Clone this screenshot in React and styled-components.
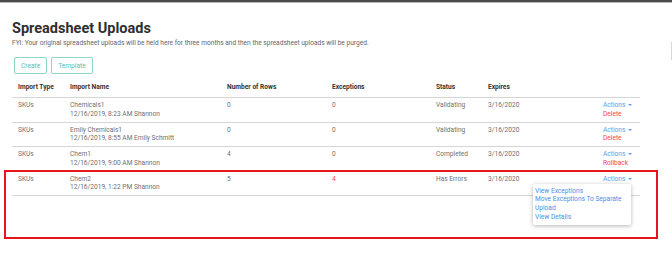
import React from "react";
import styled, { createGlobalStyle } from "styled-components";

const GlobalStyle = createGlobalStyle`
  html, body {
    margin: 0;
    padding: 0;
    background: #ffffff;
    font-family: Roboto, "Liberation Sans", sans-serif;
  }
`;

const rows = [
  {
    type: "SKUs",
    name: "Chemicals1",
    meta: "12/16/2019, 8:23 AM Shannon",
    count: "0",
    exceptions: "0",
    status: "Validating",
    expires: "3/16/2020",
    extra: "Delete",
  },
  {
    type: "SKUs",
    name: "Emily Chemicals1",
    meta: "12/16/2019, 8:55 AM Emily Schmitt",
    count: "0",
    exceptions: "0",
    status: "Validating",
    expires: "3/16/2020",
    extra: "Delete",
  },
  {
    type: "SKUs",
    name: "Chem1",
    meta: "12/16/2019, 9:00 AM Shannon",
    count: "4",
    exceptions: "0",
    status: "Completed",
    expires: "3/16/2020",
    extra: "Rollback",
  },
  {
    type: "SKUs",
    name: "Chem2",
    meta: "12/16/2019, 1:22 PM Shannon",
    count: "5",
    exceptions: "4",
    status: "Has Errors",
    expires: "3/16/2020",
    open: true,
  },
];

export default function App() {
  return (
    <Page>
      <GlobalStyle />
      <TopBar />
      <ScrollMark />
      <Content>
        <Title>Spreadsheet Uploads</Title>
        <Note>
          FYI: Your original spreadsheet uploads will be held here for three months and then the
          spreadsheet uploads will be purged.
        </Note>
        <Buttons>
          <OutlineButton>Create</OutlineButton>
          <OutlineButton>Template</OutlineButton>
        </Buttons>
        <Table>
          <HeadRow>
            <HeadCell>Import Type</HeadCell>
            <HeadCell>Import Name</HeadCell>
            <HeadCell>Number of Rows</HeadCell>
            <HeadCell>Exceptions</HeadCell>
            <HeadCell>Status</HeadCell>
            <HeadCell>Expires</HeadCell>
            <HeadCell />
          </HeadRow>
          {rows.map((r, i) => (
            <Row key={i}>
              {r.open && <Highlight />}
              <Cell>{r.type}</Cell>
              <Cell>
                {r.name}
                <br />
                {r.meta}
              </Cell>
              <Cell>{r.count}</Cell>
              <Cell $error={r.exceptions !== "0"}>{r.exceptions}</Cell>
              <Cell>{r.status}</Cell>
              <Cell>{r.expires}</Cell>
              <ActionCell>
                <ActionsLink>
                  Actions <Caret />
                </ActionsLink>
                {r.extra && <DangerLink>{r.extra}</DangerLink>}
                {r.open && (
                  <Menu>
                    <MenuItem>View Exceptions</MenuItem>
                    <MenuItem>Move Exceptions To Separate Upload</MenuItem>
                    <MenuItem>View Details</MenuItem>
                  </Menu>
                )}
              </ActionCell>
            </Row>
          ))}
        </Table>
      </Content>
    </Page>
  );
}

const Page = styled.div`
  position: relative;
  width: 672px;
  height: 256px;
  overflow: hidden;
`;

const TopBar = styled.div`
  height: 2px;
  background-color: #4a4a4a;
  border-bottom: 1px solid #b8b8b8;
`;

const ScrollMark = styled.div`
  position: absolute;
  right: 0;
  top: 42px;
  width: 1px;
  height: 18px;
  background-color: #d8d8d8;
`;

const Content = styled.div`
  padding: 0 32px 0 12px;
  display: flex;
  flex-direction: column;
`;

const Title = styled.h1`
  margin: 16px 0 0 0;
  font-size: 14.5px;
  line-height: 20px;
  font-weight: 700;
  color: #2f2f2f;
`;

const Note = styled.div`
  margin-top: 0;
  font-size: 6.6px;
  line-height: 9px;
  color: #666;
`;

const Buttons = styled.div`
  display: flex;
  gap: 4px;
  margin: 9px 0 0 2px;
`;

const OutlineButton = styled.div`
  height: 15px;
  padding: 0 6px;
  display: flex;
  align-items: center;
  border: 1px solid #8fd3c9;
  border-radius: 2px;
  font-size: 6.6px;
  color: #5bbcaf;
`;

const Table = styled.div`
  margin-top: 3px;
  width: 628px;
  display: flex;
  flex-direction: column;
`;

const columns = "52px 157px 105px 104px 52px 115px 43px";

const HeadRow = styled.div`
  display: grid;
  grid-template-columns: ${columns};
  height: 20px;
  align-items: center;
  border-bottom: 1px solid #d6d6d6;
`;

const HeadCell = styled.div`
  padding-left: 6px;
  font-size: 6.6px;
  font-weight: 700;
  color: #333;
`;

const Row = styled.div`
  position: relative;
  display: grid;
  grid-template-columns: ${columns};
  height: 24.5px;
  padding-top: 3px;
  box-sizing: border-box;
  border-bottom: 1px solid #d6d6d6;
`;

const Cell = styled.div`
  padding-left: 6px;
  font-size: 6.6px;
  line-height: 8.6px;
  color: ${(p) => (p.$error ? "#f04848" : "#707070")};
`;

const ActionCell = styled.div`
  position: relative;
  padding-left: 6px;
  display: flex;
  flex-direction: column;
  font-size: 6.6px;
  line-height: 8.6px;
`;

const ActionsLink = styled.span`
  color: #5a9cf0;
  white-space: nowrap;
`;

const Caret = styled.span`
  display: inline-block;
  width: 0;
  height: 0;
  margin-left: 1px;
  vertical-align: middle;
  border-left: 2px solid transparent;
  border-right: 2px solid transparent;
  border-top: 2px solid #5a9cf0;
`;

const DangerLink = styled.span`
  color: #f04848;
`;

const Menu = styled.div`
  position: absolute;
  top: 9px;
  right: 9px;
  width: 94px;
  padding: 3px 2px 3px 2px;
  background: #fff;
  border-radius: 2px;
  box-shadow: 0 1px 4px rgba(0, 0, 0, 0.3);
  z-index: 2;
`;

const MenuItem = styled.div`
  color: #4a8fe8;
  font-size: 6.6px;
  line-height: 8.8px;
`;

const Highlight = styled.div`
  position: absolute;
  left: -8px;
  right: -18px;
  top: -2px;
  height: 65px;
  border: 2px solid #e8141c;
  pointer-events: none;
`;
